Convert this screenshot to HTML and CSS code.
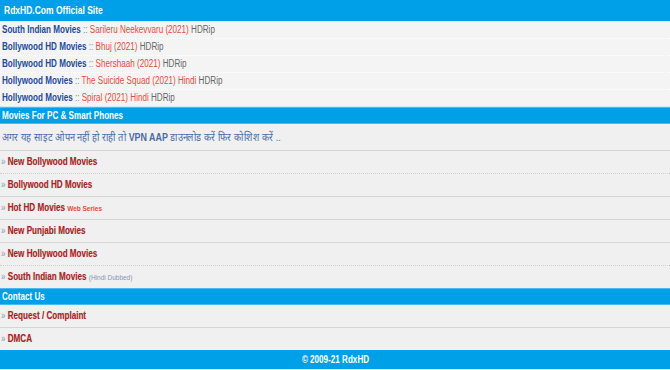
FILE: index.html
```html
<!DOCTYPE html>
<html lang="hi">
<head>
  <meta charset="UTF-8">
  <meta name="viewport" content="width=device-width, initial-scale=1.0">
  <title>RdxHD.Com Official Site</title>
  <link rel="stylesheet" href="styles.css">
</head>
<body>
  <div class="site-title"><span class="sq">RdxHD.Com Official Site</span></div>

  <div class="latest">
    <div class="latest-item"><span class="sq"><a class="cat">South Indian Movies</a> <span class="sep">::</span> <a class="title">Sarileru Neekevvaru (2021)</a> <span class="quality">HDRip</span></span></div>
    <div class="latest-item"><span class="sq"><a class="cat">Bollywood HD Movies</a> <span class="sep">::</span> <a class="title">Bhuj (2021)</a> <span class="quality">HDRip</span></span></div>
    <div class="latest-item"><span class="sq"><a class="cat">Bollywood HD Movies</a> <span class="sep">::</span> <a class="title">Shershaah (2021)</a> <span class="quality">HDRip</span></span></div>
    <div class="latest-item"><span class="sq"><a class="cat">Hollywood Movies</a> <span class="sep">::</span> <a class="title">The Suicide Squad (2021) Hindi</a> <span class="quality">HDRip</span></span></div>
    <div class="latest-item"><span class="sq"><a class="cat">Hollywood Movies</a> <span class="sep">::</span> <a class="title">Spiral (2021) Hindi</a> <span class="quality">HDRip</span></span></div>
  </div>

  <div class="section-head"><span class="sq">Movies For PC &amp; Smart Phones</span></div>
  <div class="notice"><span class="sq">अगर यह साइट ओपन नहीं हो राही तो <b>VPN AAP</b> डाउनलोड करें फिर कोशिश करें ..</span></div>
  <div class="menu">
    <div class="menu-item dotted"><span class="sq"><span class="arrow">»</span> <a>New Bollywood Movies</a></span></div>
    <div class="menu-item"><span class="sq"><span class="arrow">»</span> <a>Bollywood HD Movies</a></span></div>
    <div class="menu-item"><span class="sq"><span class="arrow">»</span> <a>Hot HD Movies</a> <span class="tag">Web Series</span></span></div>
    <div class="menu-item"><span class="sq"><span class="arrow">»</span> <a>New Punjabi Movies</a></span></div>
    <div class="menu-item dotted"><span class="sq"><span class="arrow">»</span> <a>New Hollywood Movies</a></span></div>
    <div class="menu-item last"><span class="sq"><span class="arrow">»</span> <a>South Indian Movies</a> <span class="note">(Hindi Dubbed)</span></span></div>
  </div>

  <div class="section-head"><span class="sq">Contact Us</span></div>
  <div class="menu">
    <div class="menu-item"><span class="sq"><span class="arrow">»</span> <a>Request / Complaint</a></span></div>
    <div class="menu-item last"><span class="sq"><span class="arrow">»</span> <a>DMCA</a></span></div>
  </div>

  <div class="footer"><span class="sq">© 2009-21 RdxHD</span></div>
</body>
</html>
```

FILE: styles.css
```css
body {
  margin: 0;
  padding: 0;
  background-color: #f0f0f0;
  font-family: 'Liberation Sans', Arial, sans-serif;
  font-size: 10px;
}
a {
  text-decoration: none;
}
/* the site uses a narrow face, so squeeze the text a bit */
.sq {
  display: inline-block;
  white-space: nowrap;
  transform: scaleX(0.81);
  transform-origin: 0 50%;
}
.site-title {
  background-color: #00a0e9;
  color: #fff;
  font-weight: bold;
  font-size: 10.5px;
  height: 21px;
  line-height: 21px;
  padding-left: 4px;
  border-bottom: 1px solid #cfeafa;
}
.latest {
  background-color: #f4f4f4;
}
.latest-item {
  height: 16px;
  line-height: 16px;
  padding-left: 2px;
  border-bottom: 1px dotted #fff;
}
.latest-item:last-child {
  border-bottom: 1px solid #cfeafa;
}
.latest-item .cat {
  color: #1d4a9c;
  font-weight: bold;
}
.latest-item .sep {
  color: #6f8cc4;
}
.latest-item .title {
  color: #ea4a3c;
}
.latest-item .quality {
  color: #666;
}
.section-head {
  background-color: #00a0e9;
  color: #fff;
  font-weight: bold;
  height: 15px;
  line-height: 15px;
  padding-left: 2px;
  border-top: 1px solid #4cbaf0;
  border-bottom: 1px solid #4cbaf0;
}
.notice {
  height: 26px;
  line-height: 27px;
  padding-left: 2px;
  color: #4a6aa8;
  font-size: 11.4px;
  border-bottom: 1px solid #d6d6d6;
}
.notice b {
  font-weight: bold;
  font-size: 11px;
}
.menu-item {
  height: 22px;
  line-height: 22px;
  padding-left: 1px;
  border-bottom: 1px solid #d6d6d6;
}
.menu-item.dotted {
  border-bottom: 1px dotted #d0d0d0;
}
.menu-item.last {
  height: 22px;
  border-bottom: none;
}
.menu-item .arrow {
  color: #8596b8;
}
.menu-item a {
  color: #a82323;
  font-weight: bold;
  font-size: 10px;
  text-shadow: 0 0 1px rgba(168, 35, 35, 0.25);
}
.menu-item .tag {
  color: #ea4a3c;
  font-weight: bold;
  font-size: 8px;
}
.menu-item .note {
  color: #8596b8;
  font-size: 8px;
}
.footer {
  background-color: #00a0e9;
  color: #fff;
  font-weight: bold;
  text-align: center;
  height: 19px;
  line-height: 19px;
}
.footer .sq {
  transform-origin: 50% 50%;
}
```
